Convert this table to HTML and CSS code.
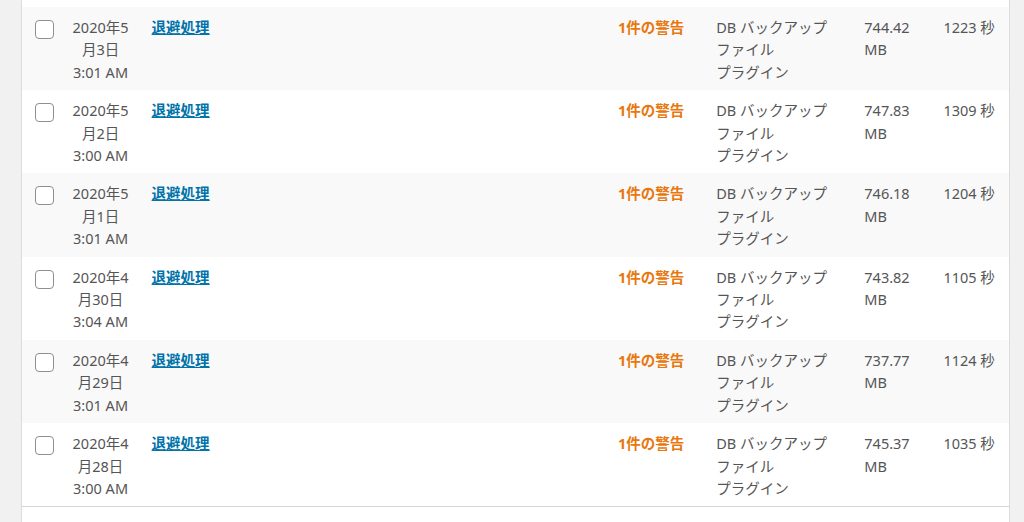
FILE: index.html
```html
<!DOCTYPE html>
<html lang="ja">
<head>
<meta charset="utf-8">
<title>バックアップ履歴</title>
<link rel="stylesheet" href="styles.css">
</head>
<body>
<div class="wrap">
  <table class="list">
    <colgroup>
      <col class="c-cb"><col class="c-date"><col class="c-title"><col class="c-status"><col class="c-type"><col class="c-size"><col class="c-time">
    </colgroup>
    <tbody>
      <tr class="tail"><td colspan="7"></td></tr>
      <tr class="alt">
        <td class="cb"><input type="checkbox"></td>
        <td class="date">2020年5<br>月3日<br>3:01 AM</td>
        <td><a class="title" href="#">退避処理</a></td>
        <td class="status">1件の警告</td>
        <td>DB バックアップ<br>ファイル<br>プラグイン</td>
        <td>744.42<br>MB</td>
        <td>1223 秒</td>
      </tr>
      <tr>
        <td class="cb"><input type="checkbox"></td>
        <td class="date">2020年5<br>月2日<br>3:00 AM</td>
        <td><a class="title" href="#">退避処理</a></td>
        <td class="status">1件の警告</td>
        <td>DB バックアップ<br>ファイル<br>プラグイン</td>
        <td>747.83<br>MB</td>
        <td>1309 秒</td>
      </tr>
      <tr class="alt">
        <td class="cb"><input type="checkbox"></td>
        <td class="date">2020年5<br>月1日<br>3:01 AM</td>
        <td><a class="title" href="#">退避処理</a></td>
        <td class="status">1件の警告</td>
        <td>DB バックアップ<br>ファイル<br>プラグイン</td>
        <td>746.18<br>MB</td>
        <td>1204 秒</td>
      </tr>
      <tr>
        <td class="cb"><input type="checkbox"></td>
        <td class="date">2020年4<br>月30日<br>3:04 AM</td>
        <td><a class="title" href="#">退避処理</a></td>
        <td class="status">1件の警告</td>
        <td>DB バックアップ<br>ファイル<br>プラグイン</td>
        <td>743.82<br>MB</td>
        <td>1105 秒</td>
      </tr>
      <tr class="alt">
        <td class="cb"><input type="checkbox"></td>
        <td class="date">2020年4<br>月29日<br>3:01 AM</td>
        <td><a class="title" href="#">退避処理</a></td>
        <td class="status">1件の警告</td>
        <td>DB バックアップ<br>ファイル<br>プラグイン</td>
        <td>737.77<br>MB</td>
        <td>1124 秒</td>
      </tr>
      <tr>
        <td class="cb"><input type="checkbox"></td>
        <td class="date">2020年4<br>月28日<br>3:00 AM</td>
        <td><a class="title" href="#">退避処理</a></td>
        <td class="status">1件の警告</td>
        <td>DB バックアップ<br>ファイル<br>プラグイン</td>
        <td>745.37<br>MB</td>
        <td>1035 秒</td>
      </tr>
    </tbody>
    <tfoot>
      <tr>
        <th></th>
        <th></th>
        <th></th>
        <th class="foot-status">状態</th>
        <th></th>
        <th></th>
        <th>処理時間</th>
      </tr>
    </tfoot>
  </table>
</div>
</body>
</html>
```

FILE: styles.css
```css
html, body {
  margin: 0;
  padding: 0;
  background: #f1f1f1;
}

body {
  font-family: "Noto Sans", "Noto Sans CJK JP", sans-serif;
  font-size: 14.5px;
  line-height: 22.4px;
  color: #555;
  overflow: hidden;
}

.wrap {
  padding: 0 14px 0 21px;
}

.list {
  width: 989px;
  border-collapse: collapse;
  table-layout: fixed;
  background: #fff;
  border-left: 1px solid #dcdcde;
  border-right: 1px solid #dcdcde;
}

.c-cb { width: 40px; }
.c-date { width: 80px; }
.c-title { width: 466px; }
.c-status { width: 98px; }
.c-type { width: 148px; }
.c-size { width: 79px; }
.c-time { width: 76px; }

.list td {
  padding: 9px 10px 7px;
  vertical-align: top;
  text-align: left;
  white-space: nowrap;
}

.list tr.tail td {
  padding: 0;
  height: 7px;
}

.list tr.alt {
  background: #f9f9f9;
}

.list td.cb {
  padding: 13px 0 0 13px;
}

.cb input {
  appearance: none;
  -webkit-appearance: none;
  display: block;
  margin: 0;
  width: 19px;
  height: 19px;
  box-sizing: border-box;
  border: 1px solid #8c8f94;
  border-radius: 4px;
  background: #fff;
}

.list td.date {
  padding-left: 9px;
  padding-right: 11px;
  text-align: center;
}

.title {
  color: #0073aa;
  font-weight: 700;
  text-decoration: underline;
  text-decoration-thickness: 1px;
}

.status {
  color: #e8770d;
  font-weight: 700;
}

.list tfoot th {
  border-top: 1px solid #d6d6d9;
  padding: 12px 10px 8px;
  font-weight: 400;
  text-align: left;
  white-space: nowrap;
  color: #555;
}

.list tfoot th.foot-status {
  padding-left: 53px;
}
```
